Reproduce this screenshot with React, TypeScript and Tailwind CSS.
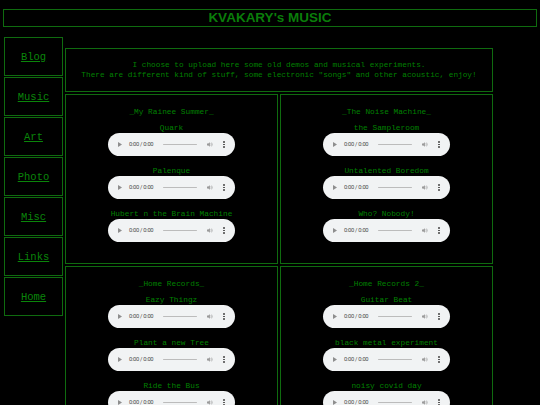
const navItems = ['Blog', 'Music', 'Art', 'Photo', 'Misc', 'Links', 'Home'];

const albums = [
  { title: '_My Rainee Summer_', tracks: ['Quark', 'Palenque', 'Hubert n the Brain Machine'] },
  { title: '_The Noise Machine_', tracks: ['the Sampleroom', 'Untalented Boredom', 'Who? Nobody!'] },
  { title: '_Home Records_', tracks: ['Eazy Thingz', 'Plant a new Tree', 'Ride the Bus'] },
  { title: '_Home Records 2_', tracks: ['Guitar Beat', 'black metal experiment', 'noisy covid day'] },
];

function Player() {
  return (
    <div className="w-[127px] h-[23px] rounded-full bg-[#f1f3f4] flex items-center">
      <svg className="ml-[10px] shrink-0" width="4" height="5" viewBox="0 0 4 5">
        <path d="M0 0 L4 2.5 L0 5 Z" fill="#8e8e8e" />
      </svg>
      <span className="ml-[7px] w-[28px] shrink-0 whitespace-nowrap text-[5.8px] leading-none tracking-[-0.3px] text-[#4a4a4a] font-['Roboto','Liberation_Sans',sans-serif]">
        0:00 / 0:00
      </span>
      <div className="ml-[6px] w-[34px] h-[1.5px] rounded-full bg-[#bcbcbc] shrink-0" />
      <svg className="ml-[10px] shrink-0" width="6" height="5" viewBox="0 0 6 5">
        <path d="M0 1.6 H1.3 L2.9 0.2 V4.8 L1.3 3.4 H0 Z" fill="#9a9a9a" />
        <path d="M3.8 1.3 Q4.6 2.5 3.8 3.7" stroke="#9a9a9a" strokeWidth="0.6" fill="none" />
        <path d="M4.6 0.6 Q6 2.5 4.6 4.4" stroke="#9a9a9a" strokeWidth="0.6" fill="none" />
      </svg>
      <div className="ml-[10px] flex flex-col gap-[0.8px] shrink-0">
        <div className="w-[1.5px] h-[1.5px] rounded-full bg-[#444]" />
        <div className="w-[1.5px] h-[1.5px] rounded-full bg-[#444]" />
        <div className="w-[1.5px] h-[1.5px] rounded-full bg-[#444]" />
      </div>
    </div>
  );
}

function Album({ title, tracks }: { title: string; tracks: string[] }) {
  return (
    <div className="border border-[#0f6b0f] flex flex-col items-center pt-[12px] pb-[21px]">
      <div className="leading-[10px] mb-[6px]">{title}</div>
      {tracks.map((t, i) => (
        <div key={t} className={`flex flex-col items-center ${i > 0 ? 'mt-[10px]' : ''}`}>
          <div className="leading-[10px] whitespace-nowrap">{t}</div>
          <Player />
        </div>
      ))}
    </div>
  );
}

export default function App() {
  return (
    <div className="min-h-[405px] bg-black text-[#008000] font-['Liberation_Mono',monospace] overflow-hidden">
      {/* Header */}
      <div className="pt-[9px] px-[3px]">
        <div className="h-[18px] border border-[#0f6b0f] flex items-center justify-center">
          <h1 className="font-['Liberation_Sans',Arial,sans-serif] font-bold text-[13.5px] leading-none text-[#0a7d0a]">
            KVAKARY's MUSIC
          </h1>
        </div>
      </div>

      <div className="flex items-start mt-[10px] pl-[4px]">
        {/* Nav */}
        <nav className="w-[59px] flex flex-col gap-[1px] shrink-0">
          {navItems.map((n) => (
            <div key={n} className="h-[39px] border border-[#0f6b0f] flex items-center justify-center pt-[2px]">
              <a href="#" className="text-[10.5px] underline text-[#0a850a]">
                {n}
              </a>
            </div>
          ))}
        </nav>

        {/* Main */}
        <main className="ml-[2px] mt-[11px] w-[428px] shrink-0">
          <div className="h-[44px] border border-[#0f6b0f] flex flex-col items-center justify-center text-[7.75px] leading-[10px] text-center">
            <div>I choose to upload here some old demos and musical experiments.</div>
            <div>There are different kind of stuff, some electronic "songs" and other acoustic, enjoy!</div>
          </div>
          <div className="mt-[2px] grid grid-cols-2 gap-[2px] text-[7.8px]">
            {albums.map((a) => (
              <Album key={a.title} title={a.title} tracks={a.tracks} />
            ))}
          </div>
        </main>
      </div>
    </div>
  );
}
